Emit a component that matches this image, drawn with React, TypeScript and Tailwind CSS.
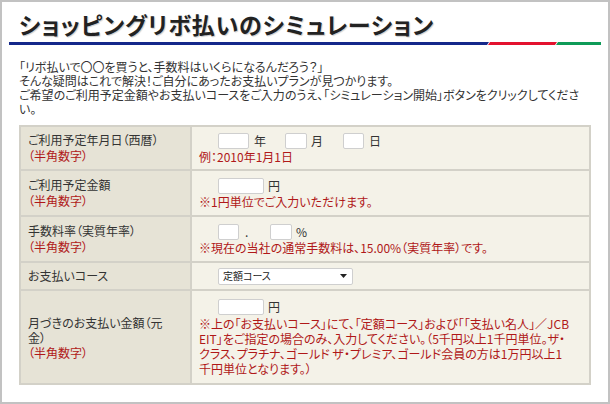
import React from 'react';

const jp = "[font-family:'Noto_Sans_CJK_JP','Noto_Sans',sans-serif] [font-feature-settings:'palt']";

const Box: React.FC<{ w: string }> = ({ w }) => (
  <span className={`inline-block h-[16px] ${w} bg-white border border-[#cfcfcf] rounded-[2px]`} />
);

const Label: React.FC<{ children: React.ReactNode }> = ({ children }) => (
  <td className="w-[171px] bg-[#e6e3d6] border-2 border-[#d3d1c8] pl-[7px] align-middle text-[12px] leading-[16px] text-[#333]">
    {children}
  </td>
);

const Half = () => <span className="text-[#b01818]">（半角数字）</span>;

const Red: React.FC<{ children: React.ReactNode }> = ({ children }) => (
  <div className="text-[12px] leading-[15px] text-[#b01818] whitespace-nowrap">{children}</div>
);

const App: React.FC = () => {
  return (
    <div className={`w-[610px] h-[404px] border-2 border-[#c2c2c2] bg-white overflow-hidden ${jp}`}>
      <h1 className="pl-[17px] pt-[7px] h-[40px] text-[23px] font-bold leading-[30px] text-[#222] [text-shadow:1px_1px_1px_rgba(0,0,0,0.2)] tracking-[0.8px]">
        ショッピングリボ払いのシミュレーション
      </h1>

      {/* 区切り線 */}
      <svg width="594" height="3" className="ml-[7px] block">
        <polygon points="0,0 480,0 478,3 0,3" fill="#14288a" />
        <polygon points="481,0 548,0 546,3 479,3" fill="#e3122e" />
        <polygon points="549,0 592,0 592,3 547,3" fill="#0e9b58" />
      </svg>

      <div className="pl-[17px] mt-[15px] text-[12px] leading-[14px] text-[#333] whitespace-nowrap">
        <p>「リボ払いで〇〇を買うと、手数料はいくらになるんだろう？」</p>
        <p>そんな疑問はこれで解決！ご自分にあったお支払いプランが見つかります。</p>
        <p>
          ご希望のご利用予定金額やお支払いコースをご入力のうえ、「シミュレーション開始」ボタンをクリックしてくださ
          <br />
          い。
        </p>
      </div>

      <table className="ml-[17px] mt-[9px] w-[572px] border-collapse">
        <tbody>
          <tr className="h-[44px]">
            <Label>
              ご利用予定年月日（西暦）
              <br />
              <Half />
            </Label>
            <td className="bg-[#f4f2e8] border-2 border-[#d3d1c8] pl-[7px] align-middle text-[12px] text-[#333]">
              <div className="flex items-center h-[17px]">
                <span className="ml-[19px] flex"><Box w="w-[31px]" /></span>
                <span className="ml-[5px]">年</span>
                <span className="ml-[19px] flex"><Box w="w-[22px]" /></span>
                <span className="ml-[4px]">月</span>
                <span className="ml-[20px] flex"><Box w="w-[21px]" /></span>
                <span className="ml-[5px]">日</span>
              </div>
              <Red>例：2010年1月1日</Red>
            </td>
          </tr>

          <tr className="h-[46px]">
            <Label>
              ご利用予定金額
              <br />
              <Half />
            </Label>
            <td className="bg-[#f4f2e8] border-2 border-[#d3d1c8] pl-[7px] align-middle text-[12px] text-[#333]">
              <div className="flex items-center h-[17px]">
                <span className="ml-[19px] flex"><Box w="w-[46px]" /></span>
                <span className="ml-[4px]">円</span>
              </div>
              <Red>※1円単位でご入力いただけます。</Red>
            </td>
          </tr>

          <tr className="h-[46px]">
            <Label>
              手数料率（実質年率）
              <br />
              <Half />
            </Label>
            <td className="bg-[#f4f2e8] border-2 border-[#d3d1c8] pl-[7px] align-middle text-[12px] text-[#333]">
              <div className="flex items-center h-[17px]">
                <span className="ml-[19px] flex"><Box w="w-[21px]" /></span>
                <span className="ml-[6px] w-[4px]">.</span>
                <span className="ml-[21px] flex"><Box w="w-[22px]" /></span>
                <span className="ml-[4px]">%</span>
              </div>
              <Red>※現在の当社の通常手数料は、15.00%（実質年率）です。</Red>
            </td>
          </tr>

          <tr className="h-[28px]">
            <Label>お支払いコース</Label>
            <td className="bg-[#f4f2e8] border-2 border-[#d3d1c8] pl-[7px] align-middle">
              <div className="ml-[19px] w-[135px] h-[17px] bg-white border border-[#cfcfcf] rounded-[2px] flex items-center justify-between pl-[4px] pr-[5px]">
                <span className="text-[10px] leading-[12px] text-[#222]">定額コース</span>
                <svg width="7" height="4" viewBox="0 0 7 4">
                  <polygon points="0,0 7,0 3.5,4" fill="#222" />
                </svg>
              </div>
            </td>
          </tr>

          <tr className="h-[94px]">
            <Label>
              <div className="leading-[15px]">
                月づきのお支払い金額（元
                <br />
                金）
                <br />
                <Half />
              </div>
            </Label>
            <td className="bg-[#f4f2e8] border-2 border-[#d3d1c8] pl-[7px] align-middle text-[12px] text-[#333]">
              <div className="flex items-center h-[17px]">
                <span className="ml-[19px] flex"><Box w="w-[46px]" /></span>
                <span className="ml-[4px]">円</span>
              </div>
              <Red>
                ※上の「お支払いコース」にて、「定額コース」および「「支払い名人」／JCB
                <br />
                EIT」をご指定の場合のみ、入力してください。（5千円以上1千円単位。ザ・
                <br />
                クラス、プラチナ、ゴールド ザ・プレミア、ゴールド会員の方は1万円以上1
                <br />
                千円単位となります。）
              </Red>
            </td>
          </tr>
        </tbody>
      </table>
    </div>
  );
};

export default App;
